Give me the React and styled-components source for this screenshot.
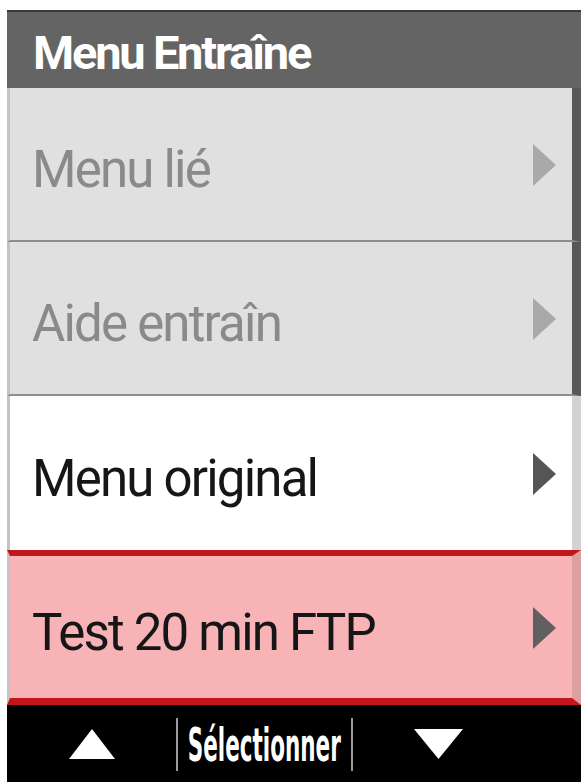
import React from "react";
import styled, { createGlobalStyle } from "styled-components";

const Global = createGlobalStyle`
  *, *::before, *::after { box-sizing: border-box; }
  html, body { margin: 0; padding: 0; background: #ffffff; }
  body { font-family: Roboto, "Liberation Sans", sans-serif; overflow: hidden; }
`;

const Frame = styled.div`
  margin: 10px 0 0 7px;
  width: 574px;
  display: flex;
  flex-direction: column;
`;

const Header = styled.div`
  height: 78px;
  background: #646464;
  border-top: 2px solid #3a3a3a;
  display: flex;
  align-items: center;
  padding: 4px 0 0 26px;
`;

const Title = styled.h1`
  margin: 0;
  color: #ffffff;
  font-family: Roboto, "Open Sans", sans-serif;
  font-weight: 700;
  font-size: 47px;
  letter-spacing: -2.2px;
  line-height: 1;
`;

const palette = {
  disabled: { bg: "#e0e0e0", text: "#8a8a8a", arrow: "#a9a9a9", strip: "#575757", divider: "#8e8e8e" },
  normal: { bg: "#ffffff", text: "#161616", arrow: "#555555", strip: "#d2d2d2", divider: "transparent" },
  selected: { bg: "#f7b3b5", text: "#161616", arrow: "#606060", strip: "#dca0a3", divider: "transparent" },
};

const Row = styled.div`
  height: ${(p) => p.$h}px;
  background: ${(p) => palette[p.$variant].bg};
  border-left: 3px solid #c4c4c4;
  border-right: 9px solid ${(p) => palette[p.$variant].strip};
  border-top: ${(p) => (p.$variant === "selected" ? "6px solid #c2161c" : "none")};
  border-bottom: ${(p) =>
    p.$variant === "selected"
      ? "7px solid #c2161c"
      : p.$divider
      ? `2px solid ${palette.disabled.divider}`
      : "none"};
  display: flex;
  align-items: center;
  justify-content: space-between;
  padding: 10px 16px 0 22px;
`;

const Label = styled.span`
  color: ${(p) => palette[p.$variant].text};
  font-family: Roboto, "Liberation Sans", sans-serif;
  font-weight: 400;
  font-size: 51px;
  letter-spacing: -1.8px;
  line-height: 1;
  white-space: nowrap;
`;

const Arrow = styled.svg`
  width: 23px;
  height: 42px;
  flex: none;
  margin-top: -8px;
`;

const Footer = styled.div`
  height: 80px;
  background: #000000;
  display: grid;
  grid-template-columns: 169px 2px 173px 2px 1fr;
  align-items: center;
  padding-bottom: 3px;
`;

const FootCell = styled.div`
  display: flex;
  align-items: center;
  justify-content: center;
  height: 100%;
  padding-right: ${(p) => p.$pr || 0}px;
  overflow: visible;
`;

const Separator = styled.div`
  width: 2px;
  height: 53px;
  background: #9a9a9a;
  margin-top: 2px;
`;

const SelectLabel = styled.span`
  display: inline-block;
  color: #ffffff;
  font-family: "DejaVu Sans Condensed", "DejaVu Sans", sans-serif;
  font-weight: 700;
  font-size: 46px;
  line-height: 1;
  white-space: nowrap;
  transform: scaleX(0.52);
  margin-top: 2px;
`;

const Tri = styled.svg`
  width: ${(p) => p.$w}px;
  height: 30px;
  display: block;
`;

const items = [
  { label: "Menu lié", variant: "disabled", h: 154, divider: true },
  { label: "Aide entraîn", variant: "disabled", h: 154, divider: true },
  { label: "Menu original", variant: "normal", h: 154 },
  { label: "Test 20 min FTP", variant: "selected", h: 155 },
];

export default function App() {
  return (
    <>
      <Global />
      <Frame>
        <Header>
          <Title>Menu Entraîne</Title>
        </Header>
        {items.map((it) => (
          <Row key={it.label} $variant={it.variant} $h={it.h} $divider={it.divider}>
            <Label $variant={it.variant}>{it.label}</Label>
            <Arrow viewBox="0 0 23 42">
              <polygon points="0,0 23,21 0,42" fill={palette[it.variant].arrow} />
            </Arrow>
          </Row>
        ))}
        <Footer>
          <FootCell>
            <Tri $w={46} viewBox="0 0 46 30">
              <polygon points="23,0 46,30 0,30" fill="#ffffff" />
            </Tri>
          </FootCell>
          <Separator />
          <FootCell>
            <SelectLabel>Sélectionner</SelectLabel>
          </FootCell>
          <Separator />
          <FootCell $pr={58}>
            <Tri $w={49} viewBox="0 0 49 30">
              <polygon points="0,0 49,0 24.5,30" fill="#ffffff" />
            </Tri>
          </FootCell>
        </Footer>
      </Frame>
    </>
  );
}
